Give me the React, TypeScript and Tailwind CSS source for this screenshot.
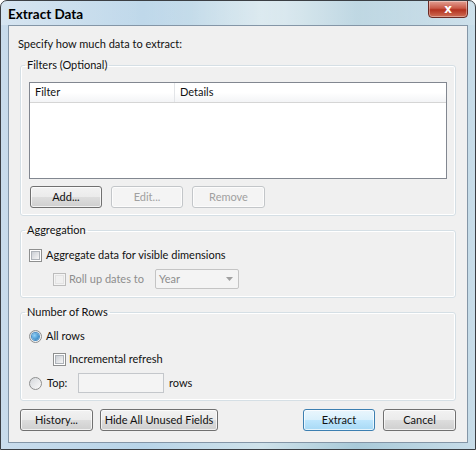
const font = "font-['Segoe_UI','Lato',sans-serif]";

function Button({
  label,
  w,
  disabled,
  focused,
}: {
  label: string;
  w: string;
  disabled?: boolean;
  focused?: boolean;
}) {
  let cls =
    "border-[#707070] text-[#111] bg-[linear-gradient(#f2f2f2_0%,#ebebeb_49%,#dddddd_51%,#cfcfcf_100%)]";
  if (disabled)
    cls = "border-[#c3c6c9] text-[#a0a0a0] bg-[#f4f4f4]";
  if (focused)
    cls =
      "border-[#3c7fb1] text-[#111] bg-[linear-gradient(#eaf6fd_0%,#d9f0fc_49%,#bee6fd_51%,#a7d9f5_100%)]";
  return (
    <div
      className={`${w} h-[22px] shrink-0 whitespace-nowrap rounded-[3px] border flex items-center justify-center text-[11px] shadow-[inset_0_0_0_1px_rgba(255,255,255,0.7)] ${cls}`}
    >
      {label}
    </div>
  );
}

function Check({ disabled }: { disabled?: boolean }) {
  return (
    <div
      className={`w-[13px] h-[13px] shrink-0 border flex items-center justify-center ${
        disabled ? "border-[#bcbcbc] bg-[#f4f4f4]" : "border-[#8e8f8f] bg-white"
      }`}
    >
      <div
        className={`w-[9px] h-[9px] border ${
          disabled
            ? "border-[#e3e3e3] bg-[#f0f0f0]"
            : "border-[#aeb3b9] bg-[linear-gradient(135deg,#cbcfd5,#f6f6f6)]"
        }`}
      />
    </div>
  );
}

function Radio({ checked }: { checked?: boolean }) {
  return (
    <div className="w-[13px] h-[13px] shrink-0 rounded-full border border-[#8e8f8f] bg-[linear-gradient(135deg,#d4d7db,#fbfbfb)] flex items-center justify-center">
      {checked && (
        <div className="w-[7px] h-[7px] rounded-full bg-[radial-gradient(circle_at_35%_35%,#8fd0f8,#1e73b5)] shadow-[0_0_0_1px_#4a8fc6]" />
      )}
    </div>
  );
}

function Group({
  title,
  className,
  children,
}: {
  title: string;
  className?: string;
  children: React.ReactNode;
}) {
  return (
    <fieldset
      className={`mx-[11px] rounded-[3px] border border-[#d5dfe5] shadow-[inset_0_0_0_1px_#fff] px-[8px] ${className ?? ""}`}
    >
      <legend className="-ml-[4px] px-[2px] h-[16px] leading-[16px] text-[11px]">
        {title}
      </legend>
      {children}
    </fieldset>
  );
}

export default function App() {
  return (
    <div
      className={`${font} w-[476px] h-[450px] overflow-hidden rounded-t-[7px] border border-[#3b3f44] bg-[linear-gradient(90deg,#c9dcec_0%,#b8d4e8_30%,#cfe2ea_55%,#a9cad9_75%,#c8dde9_100%)] flex flex-col text-[#111]`}
    >
      {/* title bar */}
      <div className="h-[24px] shrink-0 flex justify-between pl-[7px] pr-[7px] bg-[linear-gradient(90deg,rgba(255,255,255,0.25),rgba(255,255,255,0.05)_40%,rgba(255,255,255,0.35)_60%,rgba(255,255,255,0.1))]">
        <div className="pt-[5px] text-[13.5px] font-bold leading-[17px] text-black">
          Extract Data
        </div>
        <div className="-mt-[1px] w-[40px] h-[18px] rounded-b-[4px] border border-[#6a2a24] bg-[linear-gradient(#e3a093_0%,#c95a48_45%,#b3321f_55%,#cf6e56_100%)] flex items-center justify-center shadow-[inset_0_0_0_1px_rgba(255,255,255,0.35)]">
          <span className="text-white text-[12px] font-bold leading-none font-['DejaVu_Sans',sans-serif]">
            x
          </span>
        </div>
      </div>

      {/* client area */}
      <div className="mx-[7px] h-[418px] shrink-0 border border-[#8496a7] bg-[#f0f0f0] flex flex-col text-[11px]">
        <div className="mt-[10px] ml-[9px] h-[16px] leading-[16px]">
          Specify how much data to extract:
        </div>

        <Group title="Filters (Optional)" className="mt-[5px] pb-[7px]">
          <div className="mt-[9px] h-[97px] border border-[#828790] bg-white flex flex-col">
            <div className="h-[20px] flex border-b border-[#d5d5d5] bg-[linear-gradient(#ffffff_0%,#ffffff_50%,#f3f4f6_100%)]">
              <div className="w-[145px] pl-[5px] border-r border-[#e3e5e8] flex items-center">
                Filter
              </div>
              <div className="pl-[5px] flex items-center">Details</div>
            </div>
          </div>
          <div className="mt-[7px] flex gap-[9px] ml-[1px]">
            <Button label="Add..." w="w-[72px]" />
            <Button label="Edit..." w="w-[72px]" disabled />
            <Button label="Remove" w="w-[73px]" disabled />
          </div>
        </Group>

        <Group title="Aggregation" className="mt-[6px] pb-[8px]">
          <div className="mt-[9px] h-[16px] flex items-center gap-[4px] whitespace-nowrap">
            <Check />
            <span>Aggregate data for visible dimensions</span>
          </div>
          <div className="mt-[6px] h-[20px] flex items-center pl-[24px] whitespace-nowrap">
            <Check disabled />
            <span className="ml-[3px] w-[86px] text-[#8d8d8d]">Roll up dates to</span>
            <div className="w-[84px] h-[20px] border border-[#c4c4c4] rounded-[2px] bg-[#f4f4f4] flex items-center justify-between pl-[3px] pr-[5px] text-[#8d8d8d]">
              <span>Year</span>
              <svg width="7" height="4" viewBox="0 0 7 4">
                <path d="M0 0h7L3.5 4z" fill="#a0a0a0" />
              </svg>
            </div>
          </div>
        </Group>

        <Group title="Number of Rows" className="mt-[6px] pb-[7px]">
          <div className="mt-[8px] h-[16px] flex items-center gap-[4px]">
            <Radio checked />
            <span>All rows</span>
          </div>
          <div className="mt-[7px] h-[16px] flex items-center gap-[3px] pl-[24px]">
            <Check />
            <span>Incremental refresh</span>
          </div>
          <div className="mt-[6px] h-[20px] flex items-center">
            <Radio />
            <span className="ml-[5px] w-[31px]">Top:</span>
            <div className="w-[86px] h-[20px] border border-[#c4c7cb] bg-[#f4f4f4]" />
            <span className="ml-[5px]">rows</span>
          </div>
        </Group>

        <div className="mt-[8px] mx-[11px] flex">
          <Button label="History..." w="w-[73px]" />
          <div className="ml-[7px]">
            <Button label="Hide All Unused Fields" w="w-[118px]" />
          </div>
          <div className="ml-auto flex gap-[8px]">
            <Button label="Extract" w="w-[72px]" focused />
            <Button label="Cancel" w="w-[73px]" />
          </div>
        </div>
      </div>
    </div>
  );
}
